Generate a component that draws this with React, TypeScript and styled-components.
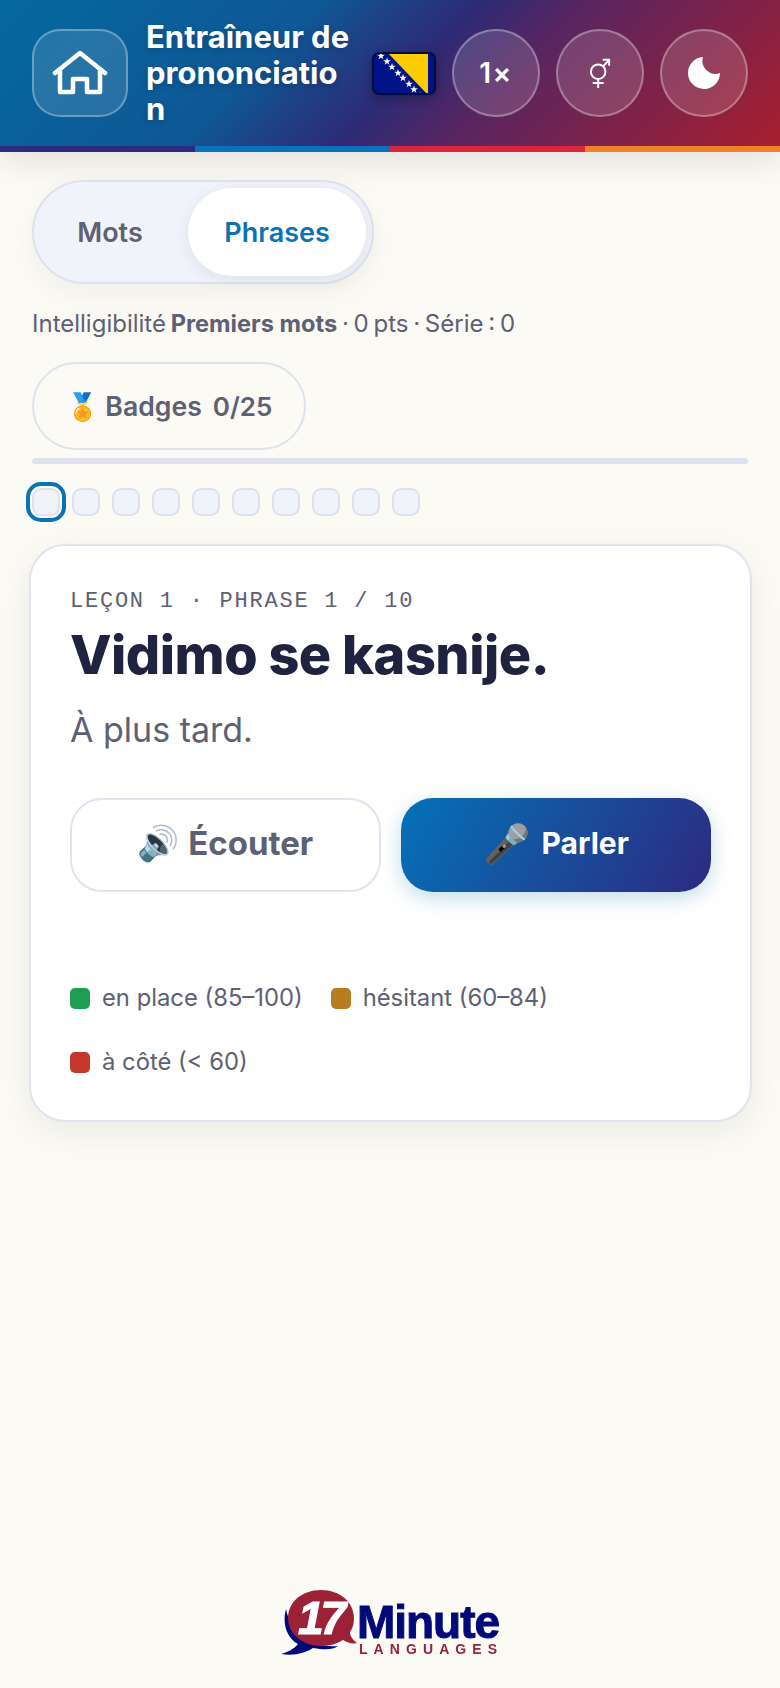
import React from "react";
import styled, { createGlobalStyle } from "styled-components";

const GlobalStyle = createGlobalStyle`
  html, body {
    margin: 0;
    padding: 0;
    background: #fbfaf4;
  }
  * {
    box-sizing: border-box;
  }
`;

const Page = styled.div`
  min-height: 1688px;
  display: flex;
  flex-direction: column;
  font-family: Inter, "Noto Sans", sans-serif;
  color: #5e6073;
`;

const Header = styled.header`
  height: 152px;
  display: flex;
  flex-direction: column;
  box-shadow: 0 8px 32px rgba(30, 30, 60, 0.12);
`;

const HeaderBar = styled.div`
  flex: 1;
  display: flex;
  align-items: center;
  gap: 16px;
  padding: 0 32px;
  background: linear-gradient(135deg, #04699f 0%, #0f5795 35%, #2e2a75 52%, #5c255e 65%, #a81f2d 100%);
`;

const HomeButton = styled.button`
  width: 96px;
  height: 88px;
  flex: none;
  padding: 0;
  display: flex;
  align-items: center;
  justify-content: center;
  border-radius: 28px;
  border: 2px solid rgba(255, 255, 255, 0.3);
  background: rgba(255, 255, 255, 0.12);
`;

const Title = styled.h1`
  width: 206px;
  flex: none;
  margin: 0 2px;
  font-size: 31px;
  line-height: 36px;
  font-weight: 700;
  color: #fff;
  overflow-wrap: anywhere;
  text-shadow: 0 2px 6px rgba(0, 0, 0, 0.2);
`;

const Flag = styled.svg`
  width: 64px;
  height: 43px;
  flex: none;
  margin-left: auto;
  border-radius: 7px;
  filter: drop-shadow(0 3px 5px rgba(0, 0, 0, 0.3));
`;

const RoundButton = styled.button`
  width: 88px;
  height: 88px;
  flex: none;
  padding: 0;
  display: flex;
  align-items: center;
  justify-content: center;
  border-radius: 50%;
  border: 2px solid rgba(255, 255, 255, 0.3);
  background: rgba(255, 255, 255, 0.14);
  color: #fff;
  font-family: Inter, sans-serif;
  font-size: 28px;
  font-weight: 600;
  letter-spacing: 1.5px;
`;

const Stripes = styled.div`
  height: 6px;
  display: grid;
  grid-template-columns: repeat(4, 1fr);
`;

const Stripe = styled.span<{ $color: string }>`
  background: ${(p) => p.$color};
`;

const Main = styled.main`
  padding: 28px 32px 0;
  display: flex;
  flex-direction: column;
  align-items: flex-start;
`;

const Tabs = styled.div`
  display: flex;
  gap: 8px;
  width: 342px;
  height: 104px;
  padding: 6px;
  border-radius: 52px;
  border: 2px solid #dfe2ee;
  background: #f0f3f9;
  box-shadow: 0 10px 28px rgba(30, 30, 60, 0.05);
`;

const Tab = styled.div<{ $active?: boolean }>`
  width: ${(p) => (p.$active ? "178px" : "140px")};
  display: flex;
  align-items: center;
  justify-content: center;
  border-radius: 44px;
  font-size: 27px;
  font-weight: 600;
  color: ${(p) => (p.$active ? "#0a72b5" : "#5e6073")};
  background: ${(p) => (p.$active ? "#fff" : "transparent")};
  box-shadow: ${(p) => (p.$active ? "0 4px 16px rgba(30, 30, 60, 0.08)" : "none")};
`;

const Stats = styled.p`
  margin: 23px 0 0;
  font-size: 24px;
  line-height: 34px;
  word-spacing: -2px;
  strong {
    font-weight: 700;
    font-size: 23.6px;
    word-spacing: 0;
  }
`;

const BadgePill = styled.div`
  margin-top: 21px;
  width: 274px;
  height: 88px;
  display: flex;
  align-items: center;
  justify-content: center;
  gap: 11px;
  border-radius: 44px;
  border: 2px solid #dfe2ee;
  font-size: 26.6px;
  font-weight: 600;
`;

const BadgeCount = styled.span`
  font-size: 26px;
`;

const Progress = styled.div`
  margin-top: 8px;
  width: 100%;
  height: 6px;
  border-radius: 3px;
  background: #dfe2ee;
`;

const Dots = styled.div`
  margin-top: 24px;
  display: flex;
  gap: 12px;
`;

const Dot = styled.span<{ $current?: boolean }>`
  width: 28px;
  height: 28px;
  border-radius: 9px;
  border: 2px solid #dfe2ee;
  background: #f0f3f9;
  outline: ${(p) => (p.$current ? "4px solid #0a72b5" : "none")};
  outline-offset: 2px;
`;

const Card = styled.section`
  margin: 28px 0 0 -3px;
  width: 723px;
  padding: 42px 39px 42px;
  border-radius: 36px;
  border: 2px solid #e1e4ef;
  background: #fff;
  box-shadow: 0 10px 36px rgba(30, 30, 60, 0.07);
`;

const Eyebrow = styled.div`
  font-family: "Liberation Mono", monospace;
  font-size: 22px;
  line-height: 28px;
  letter-spacing: 0.08em;
`;

const Phrase = styled.h2`
  margin: 3px 0 0;
  font-size: 54px;
  line-height: 72px;
  font-weight: 800;
  letter-spacing: -0.5px;
  color: #20233f;
`;

const Translation = styled.p`
  margin: 17px 0 0;
  font-size: 34px;
  line-height: 44px;
`;

const Actions = styled.div`
  margin-top: 46px;
  display: grid;
  grid-template-columns: 1fr 1fr;
  gap: 20px;
`;

const ActionButton = styled.button<{ $primary?: boolean }>`
  height: 94px;
  padding: 0 0 5px;
  display: flex;
  align-items: center;
  justify-content: center;
  gap: ${(p) => (p.$primary ? "12px" : "9px")};
  border-radius: 32px;
  font-family: Inter, sans-serif;
  font-weight: 700;
  font-size: ${(p) => (p.$primary ? "30px" : "33px")};
  color: ${(p) => (p.$primary ? "#fff" : "#5e6073")};
  border: ${(p) => (p.$primary ? "none" : "2px solid #e1e4ef")};
  background: ${(p) => (p.$primary ? "linear-gradient(120deg, #0472b8, #2d2a80)" : "#fff")};
  box-shadow: ${(p) => (p.$primary ? "0 6px 20px rgba(10, 114, 181, 0.25)" : "none")};
`;

const ActionEmoji = styled.span<{ $size: number }>`
  font-size: ${(p) => p.$size}px;
  font-weight: 400;
`;

const Legend = styled.ul`
  list-style: none;
  margin: 90px 0 0;
  padding: 0;
  display: flex;
  flex-wrap: wrap;
  gap: 32px 28px;
`;

const LegendItem = styled.li`
  display: flex;
  align-items: center;
  gap: 12px;
  font-size: 23.8px;
  line-height: 32px;
`;

const Swatch = styled.span<{ $color: string }>`
  width: 20px;
  height: 21px;
  border-radius: 5px;
  background: ${(p) => p.$color};
`;

const Footer = styled.footer`
  margin-top: auto;
  padding-bottom: 32px;
  display: flex;
  justify-content: center;
`;

const Logo = styled.div`
  display: flex;
  align-items: flex-start;
  filter: drop-shadow(0 0 6px rgba(255, 255, 255, 0.9));
`;

const Bubble = styled.div`
  position: relative;
  width: 78px;
  height: 66px;
  flex: none;
`;

const BubbleArt = styled.svg`
  width: 78px;
  height: 66px;
  display: block;
`;

const BubbleNumber = styled.span`
  position: absolute;
  left: 17px;
  top: 3px;
  font-family: "Liberation Sans", sans-serif;
  font-style: italic;
  font-weight: 700;
  font-size: 46px;
  line-height: 50px;
  letter-spacing: -3px;
  color: #fff;
  -webkit-text-stroke: 1.2px #fff;
`;

const LogoWords = styled.div`
  margin-left: -2px;
  padding-top: 12px;
  display: flex;
  flex-direction: column;
`;

const LogoName = styled.span`
  font-family: "Liberation Sans", sans-serif;
  font-weight: 700;
  font-size: 46px;
  line-height: 40px;
  letter-spacing: -1px;
  color: #000a78;
  -webkit-text-stroke: 1px #000a78;
`;

const LogoSub = styled.span`
  font-family: "Liberation Sans", sans-serif;
  font-weight: 700;
  font-size: 14px;
  line-height: 14px;
  letter-spacing: 6.1px;
  margin: 0 -6px 0 2px;
  color: #9c2136;
`;

const stripes = ["#2e2a80", "#0a72ba", "#d9263a", "#ee8229"];
const legend = [
  { color: "#1f9d55", label: "en place (85–100)" },
  { color: "#b77d20", label: "hésitant (60–84)" },
  { color: "#c5382b", label: "à côté (< 60)" },
];
const starPositions = [
  [9, 4],
  [15, 9.5],
  [20, 15],
  [26, 21],
  [31, 26],
  [37, 32],
  [42, 37.5],
  [48, 44],
];

const Star = ({ x, y }: { x: number; y: number }) => (
  <polygon
    transform={`translate(${x} ${y}) scale(4)`}
    points="0,-1 0.24,-0.31 0.95,-0.31 0.38,0.12 0.59,0.81 0,0.4 -0.59,0.81 -0.38,0.12 -0.95,-0.31 -0.24,-0.31"
    fill="#fff"
  />
);

export default function App() {
  return (
    <Page>
      <GlobalStyle />
      <Header>
        <HeaderBar>
          <HomeButton aria-label="Accueil">
            <svg width="56" height="46" viewBox="0 0 56 46" fill="none" stroke="#fff" strokeWidth="4.5" strokeLinecap="round" strokeLinejoin="round">
              <path d="M3 23 L28 3 L53 23" />
              <path d="M8 19 V42 H21 V29 H35 V42 H48 V19" />
            </svg>
          </HomeButton>
          <Title>Entraîneur de prononciation</Title>
          <Flag viewBox="0 0 64 43">
            <rect width="64" height="43" fill="#001489" />
            <polygon points="15,0 56,0 56,43" fill="#fecb00" />
            {starPositions.map(([x, y]) => (
              <Star key={x} x={x} y={y} />
            ))}
            <rect x="1" y="1" width="62" height="41" rx="6" fill="none" stroke="#050a3c" strokeWidth="2" />
          </Flag>
          <RoundButton>1×</RoundButton>
          <RoundButton aria-label="Voix">
            <svg width="22" height="31" viewBox="0 0 24 34" fill="none" stroke="#fff" strokeWidth="2.2">
              <circle cx="10" cy="15" r="8" />
              <path d="M10 23 V33 M4 27.5 H16" />
              <path d="M15.5 9 L22 2 M15 2 H22 V8.5" />
            </svg>
          </RoundButton>
          <RoundButton aria-label="Mode sombre">
            <svg width="34" height="34" viewBox="0 0 34 34">
              <path d="M16 1 A16 16 0 1 0 33 17 A13 13 0 0 1 16 1 Z" fill="#fff" />
            </svg>
          </RoundButton>
        </HeaderBar>
        <Stripes>
          {stripes.map((c) => (
            <Stripe key={c} $color={c} />
          ))}
        </Stripes>
      </Header>

      <Main>
        <Tabs>
          <Tab>Mots</Tab>
          <Tab $active>Phrases</Tab>
        </Tabs>
        <Stats>
          Intelligibilité <strong>Premiers mots</strong> · 0 pts · Série : 0
        </Stats>
        <BadgePill>
          <span>🏅 Badges</span>
          <BadgeCount>0/25</BadgeCount>
        </BadgePill>
        <Progress />
        <Dots>
          {Array.from({ length: 10 }, (_, i) => (
            <Dot key={i} $current={i === 0} />
          ))}
        </Dots>
        <Card>
          <Eyebrow>LEÇON 1 · PHRASE 1 / 10</Eyebrow>
          <Phrase>Vidimo se kasnije.</Phrase>
          <Translation>À plus tard.</Translation>
          <Actions>
            <ActionButton>
              <ActionEmoji $size={34}>🔊</ActionEmoji>
              Écouter
            </ActionButton>
            <ActionButton $primary>
              <ActionEmoji $size={38}>🎤</ActionEmoji>
              Parler
            </ActionButton>
          </Actions>
          <Legend>
            {legend.map((item) => (
              <LegendItem key={item.label}>
                <Swatch $color={item.color} />
                {item.label}
              </LegendItem>
            ))}
          </Legend>
        </Card>
      </Main>

      <Footer>
        <Logo>
          <Bubble>
            <BubbleArt viewBox="0 0 78 66">
              <path d="M5 19 C1 34 6 48 17 54 C13 59 7 62 0 64 C14 66 24 63 32 58 C44 60 52 60 57 56 C36 58 10 46 5 19 Z" fill="#000a78" />
              <path d="M40 0 C21 0 7 12 7 28 C7 44 22 56 40 56 C50 56 57 53 62 50 C67 53 71 54 76 53 C71 49 69 46 69 42 C72 38 73 33 73 28 C73 12 59 0 40 0 Z" fill="#9c2136" />
            </BubbleArt>
            <BubbleNumber>17</BubbleNumber>
          </Bubble>
          <LogoWords>
            <LogoName>Minute</LogoName>
            <LogoSub>LANGUAGES</LogoSub>
          </LogoWords>
        </Logo>
      </Footer>
    </Page>
  );
}
